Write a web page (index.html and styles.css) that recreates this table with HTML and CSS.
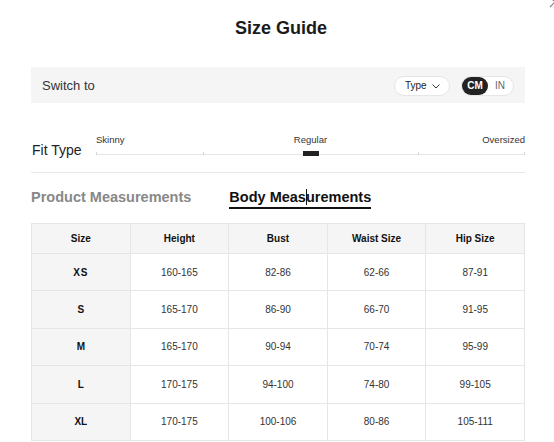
FILE: index.html
```html
<!DOCTYPE html>
<html>
<head>
<meta charset="utf-8">
<link rel="stylesheet" href="styles.css">
</head>
<body>
<div class="modal">
  <svg class="close" width="12" height="12" viewBox="0 0 12 12"><path d="M1 1 L11 11 M11 1 L1 11" stroke="#888" stroke-width="1.2" fill="none"/></svg>
  <h1 class="title">Size Guide</h1>

  <div class="switch-bar">
    <span class="switch-label">Switch to</span>
    <div class="switch-controls">
      <div class="type-pill">
        <span>Type</span>
        <svg class="chev" width="8" height="5" viewBox="0 0 8 5"><path d="M0.5 0.5 L4 4 L7.5 0.5" stroke="#333" stroke-width="1" fill="none"/></svg>
      </div>
      <div class="unit-pill">
        <span class="unit active">CM</span>
        <span class="unit">IN</span>
      </div>
    </div>
  </div>

  <div class="fit">
    <div class="fit-label">Fit Type</div>
    <div class="slider">
      <div class="slider-labels">
        <span class="sl-left">Skinny</span>
        <span class="sl-mid">Regular</span>
        <span class="sl-right">Oversized</span>
      </div>
      <div class="track">
        <i class="tick t0"></i>
        <i class="tick t25"></i>
        <i class="tick t75"></i>
        <i class="tick t100"></i>
        <i class="mark"></i>
      </div>
    </div>
  </div>

  <div class="tabs">
    <span class="tab">Product Measurements</span>
    <span class="tab active">Body Meas<i class="caret"></i>urements</span>
  </div>

  <table class="size-table">
    <thead>
      <tr><th>Size</th><th>Height</th><th>Bust</th><th>Waist Size</th><th>Hip Size</th></tr>
    </thead>
    <tbody>
      <tr><td class="sz xs">XS</td><td>160-165</td><td>82-86</td><td>62-66</td><td>87-91</td></tr>
      <tr><td class="sz">S</td><td>165-170</td><td>86-90</td><td>66-70</td><td>91-95</td></tr>
      <tr><td class="sz">M</td><td>165-170</td><td>90-94</td><td>70-74</td><td>95-99</td></tr>
      <tr><td class="sz">L</td><td>170-175</td><td>94-100</td><td>74-80</td><td>99-105</td></tr>
      <tr><td class="sz">XL</td><td>170-175</td><td>100-106</td><td>80-86</td><td>105-111</td></tr>
    </tbody>
  </table>
</div>
</body>
</html>
```

FILE: styles.css
```css
html, body {
  margin: 0;
  padding: 0;
  background: #fff;
  overflow: hidden;
}
body {
  font-family: "Liberation Sans", Arial, sans-serif;
  color: #222;
}
.modal {
  position: relative;
  padding: 16px 29px 0 31px;
}
.close {
  position: absolute;
  left: 549px;
  top: -4px;
}
.title {
  margin: 0;
  font-size: 18px;
  line-height: 24px;
  font-weight: bold;
  text-align: center;
  color: #1a1a1a;
  padding-left: 6px;
}
.switch-bar {
  margin-top: 27px;
  height: 36px;
  background: #f5f5f5;
  display: flex;
  align-items: center;
  justify-content: space-between;
  padding: 0 11px 0 11px;
}
.switch-label {
  font-size: 13px;
  color: #333;
}
.switch-controls {
  display: flex;
  align-items: center;
  gap: 11px;
  padding-top: 1px;
}
.type-pill {
  box-sizing: border-box;
  height: 20px;
  width: 56px;
  border: 1px solid #e6e6e6;
  border-radius: 10px;
  background: #fff;
  display: flex;
  align-items: center;
  padding: 0 0 0 10px;
  gap: 5px;
  font-size: 10px;
  color: #222;
}
.chev {
  margin-top: 1px;
}
.unit-pill {
  box-sizing: border-box;
  height: 20px;
  width: 53px;
  border: 1px solid #e6e6e6;
  border-radius: 10px;
  background: #fff;
  display: flex;
  align-items: center;
  font-size: 10px;
}
.unit {
  height: 18px;
  line-height: 18px;
  text-align: center;
  color: #666;
}
.unit.active {
  width: 26px;
  border-radius: 9px;
  background: #222;
  color: #fff;
  font-weight: bold;
}
.unit + .unit {
  margin-left: 7px;
}
.fit {
  margin-top: 31px;
  display: flex;
  align-items: flex-end;
  padding-bottom: 17px;
  border-bottom: 1px solid #e8e8e8;
}
.fit-label {
  width: 64px;
  padding-left: 1px;
  font-size: 14px;
  line-height: 16px;
  color: #222;
  margin-bottom: -3px;
}
.slider {
  flex: 1;
}
.slider-labels {
  display: grid;
  grid-template-columns: 1fr auto 1fr;
  font-size: 9.5px;
  line-height: 11px;
  color: #333;
}
.sl-left { justify-self: start; }
.sl-mid { justify-self: center; }
.sl-right { justify-self: end; }
.track {
  position: relative;
  margin-top: 9px;
  height: 1px;
  background: #e6e6e6;
}
.tick {
  position: absolute;
  bottom: 0;
  width: 1px;
  height: 3px;
  background: #d6d6d6;
}
.t0 { left: 0; }
.t25 { left: 25%; }
.t75 { left: 75%; }
.t100 { right: 0; }
.mark {
  position: absolute;
  left: 50%;
  top: -3px;
  width: 16px;
  height: 5px;
  margin-left: -8px;
  background: #222;
}
.tabs {
  display: flex;
  gap: 38px;
  margin-top: 15px;
}
.tab {
  font-size: 14.5px;
  font-weight: bold;
  line-height: 18px;
  color: #888;
  padding-bottom: 1px;
}
.tab.active {
  color: #111;
  border-bottom: 2px solid #111;
}
.caret {
  display: inline-block;
  width: 1px;
  height: 16px;
  margin-right: -1px;
  background: #111;
  vertical-align: -3px;
}
.size-table {
  margin-top: 14px;
  width: 494px;
  border-collapse: collapse;
  table-layout: fixed;
  font-size: 10px;
  text-align: center;
}
.size-table th,
.size-table td {
  border: 1px solid #e6e6e6;
  padding: 0;
}
.size-table th {
  height: 29px;
  background: #f5f5f5;
  font-weight: bold;
  color: #111;
}
.size-table td {
  height: 36.4px;
  color: #333;
}
.size-table td.sz {
  background: #f5f5f5;
  font-weight: bold;
  color: #111;
}
.size-table td.xs {
  letter-spacing: 1px;
}
```
